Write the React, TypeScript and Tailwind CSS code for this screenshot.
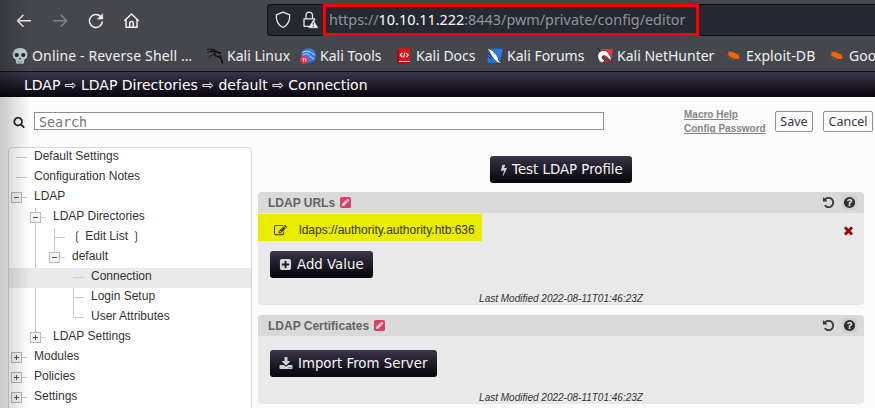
import type { ReactNode } from 'react';

const FA = {
  search: 'M1216 832q0-185-131.5-316.5t-316.5-131.5-316.5 131.5-131.5 316.5 131.5 316.5 316.5 131.5 316.5-131.5 131.5-316.5zm512 832q0 52-38 90t-90 38q-54 0-90-38l-343-342q-179 124-399 124-143 0-273.5-55.5t-225-150-150-225-55.5-273.5 55.5-273.5 150-225 225-150 273.5-55.5 273.5 55.5 225 150 150 225 55.5 273.5q0 220-124 399l343 343q37 37 37 90z',
  times: 'M1490 1322q0 40-28 68l-136 136q-28 28-68 28t-68-28l-294-294-294 294q-28 28-68 28t-68-28l-136-136q-28-28-28-68t28-68l294-294-294-294q-28-28-28-68t28-68l136-136q28-28 68-28t68 28l294 294 294-294q28-28 68-28t68 28l136 136q28 28 28 68t-28 68l-294 294 294 294q28 28 28 68z',
  plus: 'M1408 960v-128q0-26-19-45t-45-19h-320v-320q0-26-19-45t-45-19h-128q-26 0-45 19t-19 45v320h-320q-26 0-45 19t-19 45v128q0 26 19 45t45 19h320v320q0 26 19 45t45 19h128q26 0 45-19t19-45v-320h320q26 0 45-19t19-45zm256-544v960q0 119-84.5 203.5t-203.5 84.5h-960q-119 0-203.5-84.5t-84.5-203.5v-960q0-119 84.5-203.5t203.5-84.5h960q119 0 203.5 84.5t84.5 203.5z',
  edit: 'M888 1184l116-116-152-152-116 116v56h96v96h56zm440-720q-16-16-33 1l-350 350q-17 17-1 33t33-1l350-350q17-17 1-33zm80 594v190q0 119-84.5 203.5t-203.5 84.5h-832q-119 0-203.5-84.5t-84.5-203.5v-832q0-119 84.5-203.5t203.5-84.5h832q63 0 117 25 15 7 18 23 3 17-9 29l-49 49q-14 14-32 8-23-6-45-6h-832q-66 0-113 47t-47 113v832q0 66 47 113t113 47h832q66 0 113-47t47-113v-126q0-13 9-22l64-64q15-15 35-7t20 29zm-96-738l288 288-672 672h-288v-288zm444 132l-92 92-288-288 92-92q28-28 68-28t68 28l152 152q28 28 28 68t-28 68z',
  help: 'M1024 1376v-192q0-14-9-23t-23-9h-192q-14 0-23 9t-9 23v192q0 14 9 23t23 9h192q14 0 23-9t9-23zm256-672q0-88-55.5-163t-138.5-116-170-41q-243 0-371 213-15 24 8 42l132 100q7 6 19 6 16 0 25-12 53-68 86-92 34-24 86-24 48 0 85.5 26t37.5 59q0 38-20 61t-68 45q-63 28-115.5 86.5t-52.5 125.5v36q0 14 9 23t23 9h192q14 0 23-9t9-23q0-19 21.5-49.5t54.5-49.5q32-18 49-28.5t46-35 44.5-48 28-60.5 12.5-81zm384 192q0 209-103 385.5t-279.5 279.5-385.5 103-385.5-103-279.5-279.5-103-385.5 103-385.5 279.5-279.5 385.5-103 385.5 103 279.5 279.5 103 385.5z',
  undo: 'M1664 896q0 156-61 298t-164 245-245 164-298 61q-172 0-327-72.5t-264-204.5q-7-10-6.5-22.5t8.5-20.5l137-138q10-9 25-9 16 2 23 12 73 95 179 147t225 52q104 0 198.5-40.5t163.5-109.5 109.5-163.5 40.5-198.5-40.5-198.5-109.5-163.5-163.5-109.5-198.5-40.5q-98 0-188 35.5t-160 101.5l137 138q31 30 14 69-17 40-59 40h-448q-26 0-45-19t-19-45v-448q0-42 40-59 39-17 69 14l130 129q107-101 244.5-156.5t284.5-55.5q156 0 298 61t245 164 164 245 61 298z',
  bolt: 'M1333 566q18 20 7 44l-540 1157q-13 25-42 25-4 0-14-2-17-5-25.5-19t-4.5-30l197-808-406 101q-4 1-12 1-18 0-31-11-18-15-13-39l201-825q4-14 16-23t28-9h328q19 0 32 12.5t13 29.5q0 8-5 18l-171 463 396-98q8-2 12-2 19 0 34 15z',
  download: 'M1344 1344q0-26-19-45t-45-19-45 19-19 45 19 45 45 19 45-19 19-45zm256 0q0-26-19-45t-45-19-45 19-19 45 19 45 45 19 45-19 19-45zm128-224v320q0 40-28 68t-68 28h-1472q-40 0-68-28t-28-68v-320q0-40 28-68t68-28h465l135 136q58 56 136 56t136-56l136-136h464q40 0 68 28t28 68zm-325-569q17 41-14 70l-448 448q-18 19-45 19t-45-19l-448-448q-31-29-14-70 17-39 59-39h256v-448q0-26 19-45t45-19h256q26 0 45 19t19 45v448h256q42 0 59 39z',
};

function Fa({ d, className }: { d: string; className: string }) {
  return (
    <svg viewBox="0 0 1792 1792" fill="currentColor" className={`shrink-0 ${className}`}>
      <path d={d} />
    </svg>
  );
}

function Skull() {
  return (
    <svg viewBox="0 0 16 16" className="size-4 shrink-0">
      <path d="M8 0C3.500 0 .7 2.800.7 6.600c0 1.600.3 2.700 1.100 3.700.6.8 1.700.9 2 1.600l.2 2.500c.1.8.7 1.300 1.500 1.300h5c.8 0 1.400-.5 1.500-1.300l.2-2.500c.3-.7 1.400-.8 2-1.600.8-1 1.100-2.100 1.100-3.700C15.300 2.800 12.500 0 8 0z" fill="#c5d0d5" />
      <circle cx="4.700" cy="7" r="2.100" fill="#23292e" />
      <circle cx="11.300" cy="7" r="2.100" fill="#23292e" />
      <path d="M8 9.200l-1.200 2h2.400z" fill="#23292e" />
      <path d="M6.200 13v2.700M8 13v2.700M9.800 13v2.700" stroke="#66747c" strokeWidth=".6" />
    </svg>
  );
}

function Dragon() {
  return (
    <svg viewBox="0 0 16 16" className="size-4 shrink-0" fill="none" stroke="#0b0b0c" strokeLinecap="round">
      <path d="M.5 1.500c3-.6 6-.3 8.500 1M.8 4.200c3-1.200 5.500-1.200 8-.5" strokeWidth="1" />
      <path d="M5 3.500c2-1 4-.5 5.500.8l2.800 1M9 3.500c-2.500 1.500-2 4.300 1 4.800 3.500.5 4.500 2 5.200 6.500" strokeWidth="1.500" />
      <path d="M7 6.500c-2.500.5-4 1.500-5 3M11 9c1-1.500 2.200-1.500 3.500-1" strokeWidth=".8" />
    </svg>
  );
}

function ToolsIcon() {
  return (
    <svg viewBox="0 0 16 16" className="size-4 shrink-0">
      <circle cx="8.500" cy="7.500" r="7.300" fill="#2f7bf6" />
      <path d="M2 4.500c4-2 8-1.500 10 1 .3.600 2.500.8 3 1.500M3 7c4-2 5.500-1.500 6 .5.3 1.800 3.500 1 5 4" fill="none" stroke="#d5e7ff" strokeWidth="1" />
      <circle cx="4" cy="12" r="3.900" fill="#ef3038" />
      <path d="M2.200 10.700h1.300v3M4.500 10.700h1.300v3" fill="none" stroke="#fff" strokeWidth=".9" />
    </svg>
  );
}

function DocsIcon() {
  return (
    <svg viewBox="0 0 16 16" className="size-4 shrink-0">
      <path d="M2 1.500Q2 .3 3.200.3H14V13H2z" fill="#e40d15" />
      <path d="M2 2v12.500h12" fill="none" stroke="#8c1115" strokeWidth="1.600" />
      <path d="M3 13.500h11" stroke="#ddd" strokeWidth="1" />
      <path d="M6.300 5L4.300 7l2 2M10.300 5l2 2-2 2M8.800 4.500l-1 5" fill="none" stroke="#fff" strokeWidth="1.100" />
    </svg>
  );
}

function ForumsIcon() {
  return (
    <svg viewBox="0 0 16 16" className="size-4 shrink-0">
      <path d="M1.500.8h14.300l-3 13.700H.5z" fill="#1f7cf2" />
      <path d="M0 0l5 2 5.500 6 1.500 5 3.500 2.800-5-1.300-5-4.500L2.500 4z" fill="#fff" stroke="#11151b" strokeWidth=".6" />
      <path d="M1 5l5 5.500M.5 8l4 3" stroke="#11151b" strokeWidth=".8" />
    </svg>
  );
}

function HunterIcon() {
  return (
    <svg viewBox="0 0 16 16" className="size-4 shrink-0">
      <path d="M4 1l11.500.3-.5 11z" fill="#f5343d" />
      <path d="M1 6c2-4 7-5 10-1.500l3 4.500v4l-4-3.500C8 6.500 4.500 7.500 5 10l3 3-3 2C1 13 0 9 1 6z" fill="#fff" stroke="#15151a" strokeWidth=".7" />
      <path d="M6 8.500c3-1 5 1.500 7.500 5M7 11l4 3.500" stroke="#d8232e" strokeWidth="1.300" fill="none" />
      <path d="M.5.3L3 2.500" stroke="#111" />
    </svg>
  );
}

function BugIcon() {
  return (
    <svg viewBox="0 0 16 16" className="size-4 shrink-0">
      <path d="M2.300 4.500c2.200-1.500 5-.8 7 .8 2.500.5 4.200 2.500 4.200 5-2.500 1.200-5.500.8-7.500-.8C3.300 9 1.700 7 2.300 4.500z" fill="#f2620f" />
      <path d="M4 5L2.500 2.500M7.500 4.500L9 2.500M11 6.500l3-.6M13 9.500l2.500.5M3 7.500L.5 8M5 9.500l-2.500 1.300M8 10.500l-2 1.300M11 11l1.500 1.500" stroke="#b95a25" strokeWidth=".7" fill="none" />
    </svg>
  );
}

const bookmarks: { icon: ReactNode; label: string; box: string }[] = [
  { icon: <Skull />, label: 'Online - Reverse Shell …', box: 'w-[195px] tracking-[0.15px]' },
  { icon: <Dragon />, label: 'Kali Linux', box: 'w-[93px]' },
  { icon: <ToolsIcon />, label: 'Kali Tools', box: 'w-[96px]' },
  { icon: <DocsIcon />, label: 'Kali Docs', box: 'w-[91px]' },
  { icon: <ForumsIcon />, label: 'Kali Forums', box: 'w-[110px]' },
  { icon: <HunterIcon />, label: 'Kali NetHunter', box: 'w-[129px]' },
  { icon: <BugIcon />, label: 'Exploit-DB', box: 'w-[103px] tracking-[0.1px]' },
  { icon: <BugIcon />, label: 'Goo', box: 'w-[46px]' },
];

function Toolbar() {
  return (
    <div className="flex h-9 items-start">
      <svg viewBox="0 0 150 36" className="h-9 w-[150px] shrink-0" fill="none" stroke="#eeeef0" strokeWidth="1.500" strokeLinecap="round" strokeLinejoin="round">
        <path d="M30.500 20.800H17.700M23 15.300l-5.500 5.500L23 26.300" />
        <path d="M53.700 20.800h12.800M61.200 15.300l5.500 5.500-5.500 5.500" stroke="#85868b" />
        <path d="M100.500 16.300a6.500 6.500 0 1 0 1.800 5.700" />
        <path d="M102.700 14v5h-5z" fill="#eeeef0" strokeWidth=".6" />
        <path d="M124.700 20.500l6.800-6.500 6.800 6.500M126 19.700v7.500h11v-7.500M129.700 27v-4q0-1.500 1.800-1.500t1.800 1.500v4" />
      </svg>
      <div className="mt-1 ml-[117px] flex h-8 flex-1 items-center rounded-l border border-r-0 border-[#101116] bg-[#272932]">
        <svg viewBox="0 0 55 30" className="h-[30px] w-[55px] shrink-0" fill="none" stroke="#e8e8ec" strokeWidth="1.300" strokeLinejoin="round">
          <path d="M15 7.200l6.700 2.600c.3 5.600-1.600 10.300-6.700 12.700-5.100-2.400-7-7.100-6.700-12.700z" />
          <path d="M42 21.300h-6v-7.500h10.500v2M38 13.500v-3.200a3.200 3.200 0 0 1 6.500 0v3.200" />
          <path d="M45.300 15.300l4.500 7.500h-9z" fill="#f4f4f6" strokeWidth=".6" />
          <path d="M45.300 17.500v2.300M45.300 21v1" stroke="#272932" strokeWidth="1" />
        </svg>
        <div className="flex h-8 w-[376px] items-center border-[3px] border-[#ff0000] pl-[3px] font-['Noto_Sans',sans-serif] text-[14.4px] whitespace-pre text-[#929399]">
          https://<span className="text-[#fbfbfe]">10.10.11.222</span>:8443/pwm/private/config/editor
        </div>
      </div>
    </div>
  );
}

const rows: { x: string; label: string; lines: string; box?: { x: number; plus: boolean }; w: number; active?: boolean }[] = [
  { x: 'w-[25px]', w: 25, label: 'Default Settings', lines: 'M7 9.500H18' },
  { x: 'w-[25px]', w: 25, label: 'Configuration Notes', lines: 'M7 9.500H18' },
  { x: 'w-[25px]', w: 25, label: 'LDAP', lines: 'M7 9.500H18', box: { x: 2, plus: false } },
  { x: 'w-[44px]', w: 44, label: 'LDAP Directories', lines: 'M26.500 0V20M26 9.500H37', box: { x: 21, plus: false } },
  { x: 'w-[63px]', w: 63, label: '❲ Edit List ❳', lines: 'M26.500 0V20M45.500 0V20M45 9.500H56' },
  { x: 'w-[63px]', w: 63, label: 'default', lines: 'M26.500 0V20M45.500 0V5M45 9.500H56', box: { x: 40, plus: false } },
  { x: 'w-[82px]', w: 82, label: 'Connection', lines: 'M64 9.500H75', active: true },
  { x: 'w-[82px]', w: 82, label: 'Login Setup', lines: 'M26.500 0V20M64.500 0V20M64 9.500H75' },
  { x: 'w-[82px]', w: 82, label: 'User Attributes', lines: 'M26.500 0V20M64.500 0V9.500M64 9.500H75' },
  { x: 'w-[44px]', w: 44, label: 'LDAP Settings', lines: 'M26.500 0V5M26 9.500H37', box: { x: 21, plus: true } },
  { x: 'w-[25px]', w: 25, label: 'Modules', lines: 'M7 9.500H18', box: { x: 2, plus: true } },
  { x: 'w-[25px]', w: 25, label: 'Policies', lines: 'M7 9.500H18', box: { x: 2, plus: true } },
  { x: 'w-[25px]', w: 25, label: 'Settings', lines: 'M7 9.500H18', box: { x: 2, plus: true } },
];

function Tree() {
  return (
    <div className="h-[270px] w-[244px] shrink-0 overflow-hidden rounded-t-sm border border-[#d4d8d8] bg-white text-[12px]">
      {rows.map((r) => (
        <div key={r.label} className={`flex h-5 ${r.active ? 'bg-[#e9e9e9]' : ''}`}>
          <svg viewBox={`0 0 ${r.w} 20`} className={`h-5 shrink-0 ${r.x}`} fill="none">
            <path d={r.lines} stroke="#cbcbcb" />
            {r.box && (
              <g>
                <rect x={r.box.x + 0.5} y="4.500" width="10" height="10" fill="#f5f5f5" stroke="#b9b9b9" />
                <path d={`M${r.box.x + 3} 9.500h5`} stroke="#555" />
                {r.box.plus && <path d={`M${r.box.x + 5.5} 7v5`} stroke="#555" />}
              </g>
            )}
          </svg>
          <span className="h-4 leading-4 whitespace-pre">{r.label}</span>
        </div>
      ))}
    </div>
  );
}

function Button({ icon, children, className }: { icon: ReactNode; children: string; className: string }) {
  return (
    <button className={`flex h-[27px] items-center rounded-[3px] bg-linear-to-b from-[#3c3649] to-[#07050d] font-['DejaVu_Sans',sans-serif] text-[13.33px] whitespace-nowrap text-[#f6f6f6] ${className}`}>
      {icon}
      {children}
    </button>
  );
}

function Panel({ title, className, children }: { title: string; className: string; children: ReactNode }) {
  return (
    <section className={`flex w-[606px] flex-col overflow-hidden rounded-[4px] bg-[#e9e9e9] ${className}`}>
      <header className="flex h-[21px] shrink-0 items-center bg-[#d9d9d9] pl-[10px] text-[12px] font-bold text-[#646464]">
        {title}
        <svg viewBox="0 0 11 11" className="ml-[5px] size-[11px]">
          <rect width="11" height="11" rx="1.800" fill="#e13d63" />
          <path d="M2 9l.5-2.400 3.500-3.500 1.900 1.900-3.500 3.500zM6.500 2.600l.7-.7q.5-.4 1 0l.9.9q.4.5 0 1l-.7.700z" fill="#fbe4e9" />
        </svg>
        <Fa d={FA.undo} className="ml-auto size-[13px] text-[#3b3b3b]" />
        <span className="mr-[7px] ml-[7px] bg-[#d0d0d0] p-px">
          <Fa d={FA.help} className="size-[13px] text-[#303030]" />
        </span>
      </header>
      {children}
      <p className="mt-auto h-[13px] text-center text-[10px] leading-[14px] italic">Last Modified 2022-08-11T01:46:23Z</p>
    </section>
  );
}

export default function App() {
  return (
    <div className="relative flex h-[408px] w-[875px] flex-col overflow-hidden bg-[#fbfbfb] font-['Liberation_Sans',Arial,sans-serif] text-[#333]">
      <div className="h-[72px] shrink-0 border-b border-[#101014] bg-[#45474d]">
        <Toolbar />
        <nav className="flex h-[35px] items-center overflow-hidden pt-[4px] pl-3 font-['Noto_Sans',sans-serif] text-[14px] text-[#f0f0f2]">
          {bookmarks.map((b) => (
            <span key={b.label} className={`flex shrink-0 items-center gap-1 whitespace-nowrap ${b.box}`}>
              {b.icon}
              {b.label}
            </span>
          ))}
        </nav>
      </div>
      <div className="flex h-[25px] shrink-0 items-center bg-linear-to-b from-[#3c3649] to-[#07050d] pt-px pl-6 font-['DejaVu_Sans',sans-serif] text-[14px] whitespace-pre text-white">
        LDAP ⇨ LDAP Directories ⇨ default ⇨ Connection
      </div>
      <div className="flex h-[50px] shrink-0 items-start">
        <Fa d={FA.search} className="mt-[19px] ml-[13px] size-3 text-[#222]" />
        <div className="mt-[15px] ml-[9px] flex h-[18px] w-[570px] items-center border border-[#8f8c9c] bg-white pt-[4px] pl-[4px] font-['DejaVu_Sans_Mono',monospace] text-[13.33px] text-[#757575]">
          Search
        </div>
        <div className="mt-[11px] ml-20 w-[91px] text-[10px] leading-[14px] font-bold text-[#858585] underline">
          <div>Macro Help</div>
          <div>Config Password</div>
        </div>
        <button className="mt-[14px] h-[21px] w-[38px] rounded-[2px] border border-[#8f8f8f] bg-white pt-px font-['Noto_Sans',sans-serif] text-[12.5px] leading-[18px] text-[#39344a]">Save</button>
        <button className="mt-[14px] ml-[10px] h-[21px] w-[50px] rounded-[2px] border border-[#8f8f8f] bg-white pt-px font-['Noto_Sans',sans-serif] text-[12.5px] leading-[18px] text-[#39344a]">Cancel</button>
      </div>
      <div className="flex pl-2">
        <Tree />
        <main className="ml-[6px] flex w-[606px] flex-col pt-[9px]">
          <Button className="w-[142px] self-center pl-[8px]" icon={<Fa d={FA.bolt} className="mr-[2px] size-3 text-[#d4d4d4]" />}>
            Test LDAP Profile
          </Button>
          <Panel title="LDAP URLs" className="mt-[9px] h-[113px]">
            <div className="mt-px flex h-[27px] items-center">
              <div className="flex h-[27px] w-[224px] items-center bg-[#ebeb00] pt-[5px] pl-[16px] text-[12px] text-[#33330a]">
                <Fa d={FA.edit} className="mr-[12px] size-[13px]" />
                ldaps://authority.authority.htb:636
              </div>
              <Fa d={FA.times} className="mt-[6px] mr-[9px] ml-auto size-[13px] text-[#990000]" />
            </div>
            <Button className="mt-[10px] ml-3 w-[103px] pl-[9px]" icon={<Fa d={FA.plus} className="mr-[5px] size-[13px] text-[#d8d8d8]" />}>
              Add Value
            </Button>
          </Panel>
          <Panel title="LDAP Certificates" className="mt-[10px] h-[89px]">
            <Button className="mt-[14px] ml-3 w-[167px] pl-[9px]" icon={<Fa d={FA.download} className="mr-[5px] size-[14px] text-[#d0d0d0]" />}>
              Import From Server
            </Button>
          </Panel>
        </main>
      </div>
      <div className="pointer-events-none absolute inset-y-0 left-0 w-[30px] bg-linear-to-r from-black/20 to-transparent" />
    </div>
  );
}
